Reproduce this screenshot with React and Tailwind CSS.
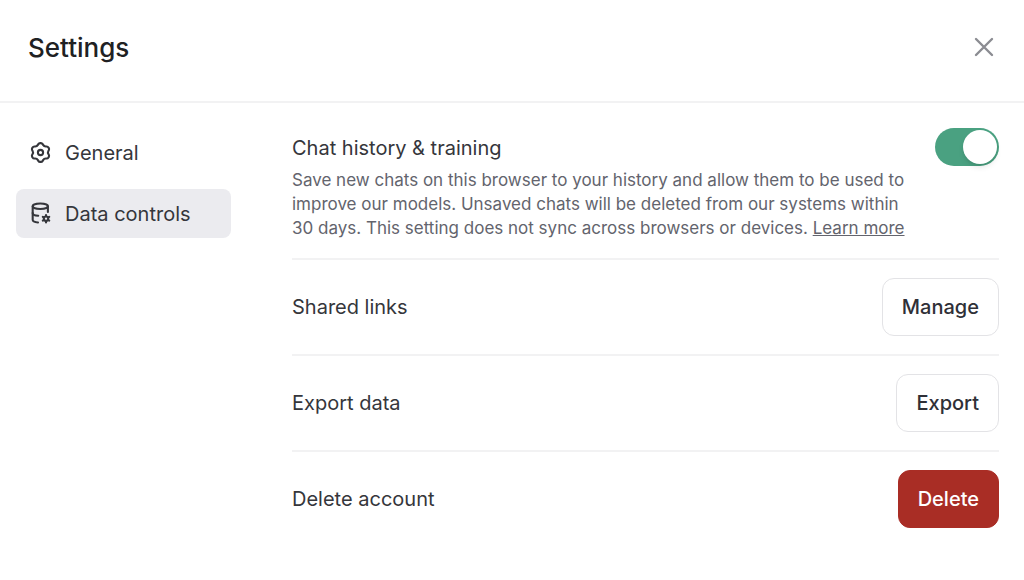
import { useState } from 'react';

function GearIcon() {
    return (
        <svg viewBox="0 0 24 24" fill="none" stroke="currentColor" strokeWidth={2} strokeLinejoin="round" className="size-[25px] shrink-0" aria-hidden="true">
            <path d="M11.6439 3C10.9352 3 10.2794 3.37508 9.92002 3.98596L9.49644 4.70605C8.96184 5.61487 7.98938 6.17632 6.93501 6.18489L6.09967 6.19168C5.39096 6.19744 4.73823 6.57783 4.38386 7.19161L4.02776 7.80841C3.67339 8.42219 3.67032 9.17767 4.01969 9.7943L4.43151 10.5212C4.95127 11.4386 4.95127 12.5615 4.43151 13.4788L4.01969 14.2057C3.67032 14.8224 3.67339 15.5778 4.02776 16.1916L4.38386 16.8084C4.73823 17.4222 5.39096 17.8026 6.09966 17.8083L6.93502 17.8151C7.98939 17.8237 8.96185 18.3851 9.49645 19.294L9.92002 20.014C10.2794 20.6249 10.9352 21 11.6439 21H12.3561C13.0648 21 13.7206 20.6249 14.08 20.014L14.5035 19.294C15.0381 18.3851 16.0106 17.8237 17.065 17.8151L17.9004 17.8083C18.6091 17.8026 19.2618 17.4222 19.6162 16.8084L19.9723 16.1916C20.3267 15.5778 20.3298 14.8224 19.9804 14.2057L19.5686 13.4788C19.0488 12.5615 19.0488 11.4386 19.5686 10.5212L19.9804 9.7943C20.3298 9.17767 20.3267 8.42219 19.9723 7.80841L19.6162 7.19161C19.2618 6.57783 18.6091 6.19744 17.9004 6.19168L17.065 6.18489C16.0106 6.17632 15.0382 5.61487 14.5036 4.70605L14.08 3.98596C13.7206 3.37508 13.0648 3 12.3561 3H11.6439Z" />
            <circle cx="12" cy="12" r="2.5" />
        </svg>
    );
}

function DatabaseGearIcon() {
    return (
        <svg viewBox="0 0 24 24" fill="none" stroke="currentColor" strokeWidth={2} strokeLinecap="round" className="size-[25px] shrink-0" aria-hidden="true">
            <ellipse cx="11.8" cy="5" rx="7.3" ry="2.6" />
            <path d="M4.5 5V18C4.5 19.4 6.4 20.4 9.6 20.6" />
            <path d="M19.1 5V10.5" />
            <path d="M4.5 11.5C4.5 12.9 6.6 14 9.8 14.2" />
            {/* small cog */}
            <circle cx="17.3" cy="17" r="2.1" strokeWidth={2} />
            <path strokeWidth={2} d="M17.3 14.2V13.4M17.3 19.8V20.6M14.9 15.6L14.2 15.2M19.7 18.4L20.4 18.8M14.9 18.4L14.2 18.8M19.7 15.6L20.4 15.2" />
        </svg>
    );
}

const tabs = [
    { id: 'general', label: 'General', Icon: GearIcon },
    { id: 'data', label: 'Data controls', Icon: DatabaseGearIcon },
];

const rows = [
    { label: 'Shared links', action: 'Manage', style: 'border border-[#e3e3e6] bg-white text-[#2f3037]' },
    { label: 'Export data', action: 'Export', style: 'border border-[#e3e3e6] bg-white text-[#2f3037]' },
    { label: 'Delete account', action: 'Delete', style: 'border border-[#a92d25] bg-[#a92d25] text-white' },
];

export default function App() {
    const [activeTab, setActiveTab] = useState('data');
    const [history, setHistory] = useState(true);

    return (
        <div className="min-h-screen bg-white font-['Inter',sans-serif] text-[#35363b]">
            {/* Header */}
            <header className="flex items-center justify-between border-b-2 border-[#f2f2f3] pt-7 pb-[33px] pl-7 pr-6">
                <h1 className="text-[26px] leading-10 font-medium text-[#202123]">Settings</h1>
                <button type="button" aria-label="Close" className="p-1 text-[#8b8c92]">
                    <svg viewBox="0 0 24 24" fill="none" stroke="currentColor" strokeWidth={2.4} strokeLinecap="round" className="size-6">
                        <path d="M4 3L20 19M20 3L4 19" />
                    </svg>
                </button>
            </header>

            <div className="flex gap-[61px] pl-4 pr-[25px]">
                {/* Tabs */}
                <nav className="flex w-[215px] shrink-0 flex-col gap-3 pt-[25px]">
                    {tabs.map(({ id, label, Icon }) => (
                        <button
                            key={id}
                            type="button"
                            onClick={() => setActiveTab(id)}
                            className={`flex h-[49px] items-center gap-3 rounded-lg px-3 text-left text-[20px] ${activeTab === id ? 'bg-[#ebebef]' : ''}`}
                        >
                            <Icon />
                            {label}
                        </button>
                    ))}
                </nav>

                {/* Data controls */}
                <main className="min-w-0 flex-1 pt-[25px]">
                    <section className="flex items-start justify-between gap-6 border-b-2 border-[#f2f2f3] pb-[18px]">
                        <div>
                            <label htmlFor="history" className="block text-[20px] leading-10">Chat history &amp; training</label>
                            <p className="text-[17px] leading-6 text-[#63646d]">
                                Save new chats on this browser to your history and allow them to be used to improve our models. Unsaved chats will be deleted from our systems within 30 days. This setting does not sync across browsers or devices.{' '}
                                <a href="#learn-more" className="underline">Learn more</a>
                            </p>
                        </div>
                        <input
                            id="history"
                            type="checkbox"
                            role="switch"
                            checked={history}
                            onChange={(e) => setHistory(e.target.checked)}
                            className="flex h-[38px] w-16 shrink-0 appearance-none items-center rounded-full bg-[#d9d9e3] px-0.5 before:size-[34px] before:rounded-full before:bg-white before:shadow-md checked:justify-end checked:bg-[#4aa181]"
                        />
                    </section>

                    {rows.map(({ label, action, style }) => (
                        <section key={label} className="flex items-center justify-between border-b-2 border-[#f2f2f3] py-[18px] last:border-b-0">
                            <h2 className="text-[20px]">{label}</h2>
                            <button type="button" className={`h-[58px] rounded-xl px-[19px] text-[20px] font-medium ${style}`}>
                                {action}
                            </button>
                        </section>
                    ))}
                </main>
            </div>
        </div>
    );
}
